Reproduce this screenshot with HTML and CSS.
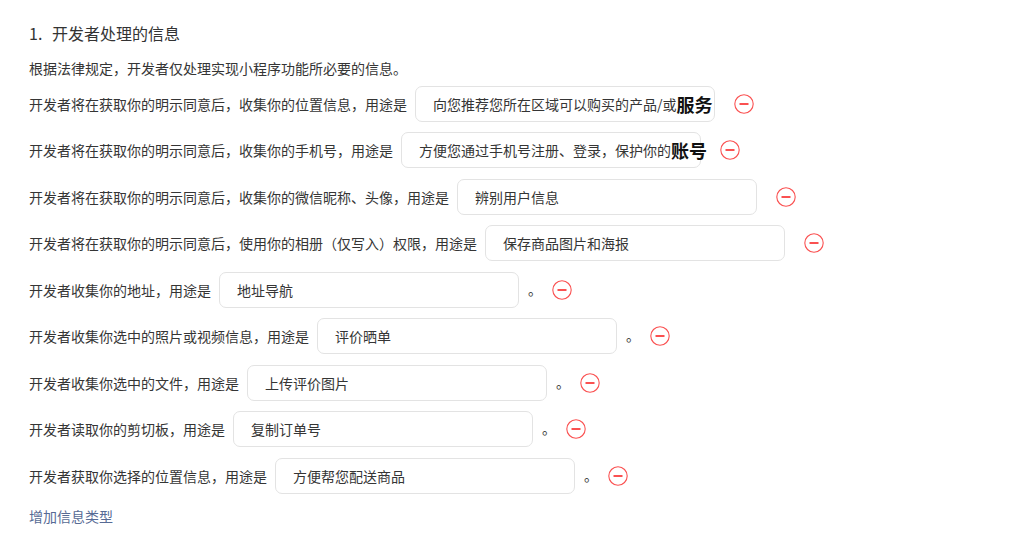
FILE: index.html
```html
<!DOCTYPE html>
<html lang="zh-CN">
<head>
<meta charset="utf-8">
<link rel="stylesheet" href="styles.css">
</head>
<body>
<div class="page">
  <h2 class="title"><span class="num">1.</span>开发者处理的信息</h2>
  <p class="desc">根据法律规定，开发者仅处理实现小程序功能所必要的信息。</p>
  <div class="rows">
    <div class="row">
      <span class="label">开发者将在获取你的明示同意后，收集你的位置信息，用途是</span>
      <div class="field">向您推荐您所在区域可以购买的产品/或<b class="big">服务</b></div>
      <span class="minus"><svg viewBox="0 0 20 20"><circle cx="10" cy="10" r="9.2"/><line x1="5.5" y1="10" x2="14.5" y2="10"/></svg></span>
    </div>
    <div class="row">
      <span class="label">开发者将在获取你的明示同意后，收集你的手机号，用途是</span>
      <div class="field">方便您通过手机号注册、登录，保护你的<b class="big">账号</b></div>
      <span class="minus"><svg viewBox="0 0 20 20"><circle cx="10" cy="10" r="9.2"/><line x1="5.5" y1="10" x2="14.5" y2="10"/></svg></span>
    </div>
    <div class="row">
      <span class="label">开发者将在获取你的明示同意后，收集你的微信昵称、头像，用途是</span>
      <div class="field">辨别用户信息</div>
      <span class="minus"><svg viewBox="0 0 20 20"><circle cx="10" cy="10" r="9.2"/><line x1="5.5" y1="10" x2="14.5" y2="10"/></svg></span>
    </div>
    <div class="row">
      <span class="label">开发者将在获取你的明示同意后，使用你的相册（仅写入）权限，用途是</span>
      <div class="field">保存商品图片和海报</div>
      <span class="minus"><svg viewBox="0 0 20 20"><circle cx="10" cy="10" r="9.2"/><line x1="5.5" y1="10" x2="14.5" y2="10"/></svg></span>
    </div>
    <div class="row">
      <span class="label">开发者收集你的地址，用途是</span>
      <div class="field">地址导航</div>
      <span class="dot">。</span>
      <span class="minus m2"><svg viewBox="0 0 20 20"><circle cx="10" cy="10" r="9.2"/><line x1="5.5" y1="10" x2="14.5" y2="10"/></svg></span>
    </div>
    <div class="row">
      <span class="label">开发者收集你选中的照片或视频信息，用途是</span>
      <div class="field">评价晒单</div>
      <span class="dot">。</span>
      <span class="minus m2"><svg viewBox="0 0 20 20"><circle cx="10" cy="10" r="9.2"/><line x1="5.5" y1="10" x2="14.5" y2="10"/></svg></span>
    </div>
    <div class="row">
      <span class="label">开发者收集你选中的文件，用途是</span>
      <div class="field">上传评价图片</div>
      <span class="dot">。</span>
      <span class="minus m2"><svg viewBox="0 0 20 20"><circle cx="10" cy="10" r="9.2"/><line x1="5.5" y1="10" x2="14.5" y2="10"/></svg></span>
    </div>
    <div class="row">
      <span class="label">开发者读取你的剪切板，用途是</span>
      <div class="field">复制订单号</div>
      <span class="dot">。</span>
      <span class="minus m2"><svg viewBox="0 0 20 20"><circle cx="10" cy="10" r="9.2"/><line x1="5.5" y1="10" x2="14.5" y2="10"/></svg></span>
    </div>
    <div class="row">
      <span class="label">开发者获取你选择的位置信息，用途是</span>
      <div class="field">方便帮您配送商品</div>
      <span class="dot">。</span>
      <span class="minus m2"><svg viewBox="0 0 20 20"><circle cx="10" cy="10" r="9.2"/><line x1="5.5" y1="10" x2="14.5" y2="10"/></svg></span>
    </div>
  </div>
  <a class="add">增加信息类型</a>
</div>
</body>
</html>
```

FILE: styles.css
```css
html, body {
  margin: 0;
  padding: 0;
  background: #fff;
}
body {
  font-family: "Noto Sans CJK SC", "Noto Sans", sans-serif;
  color: #353535;
}
.page {
  padding: 22px 0 0 29px;
}
.title {
  margin: 0;
  font-size: 16px;
  font-weight: normal;
  line-height: 22px;
  color: #333;
}
.num {
  display: inline-block;
  width: 23px;
}
.desc {
  margin: 14px 0 0;
  font-size: 14px;
  line-height: 20px;
  color: #353535;
}
.rows {
  margin-top: 7.5px;
  display: flex;
  flex-direction: column;
  gap: 10.5px;
}
.row {
  display: flex;
  align-items: center;
  height: 36px;
  font-size: 14px;
}
.label {
  white-space: nowrap;
  line-height: 20px;
}
.field {
  margin-left: 8px;
  width: 300px;
  height: 36px;
  box-sizing: border-box;
  border: 1px solid #e3e3e3;
  border-radius: 7px;
  padding: 0 0 0 17px;
  display: flex;
  align-items: center;
  white-space: nowrap;
  font-size: 14px;
  color: #353535;
  flex-shrink: 0;
}
.big {
  font-size: 18px;
  font-weight: bold;
  color: #111;
}
.dot {
  margin-left: 9px;
  width: 14px;
  line-height: 20px;
  position: relative;
  top: -1px;
}
.minus {
  margin-left: 19px;
  width: 20px;
  height: 20px;
  display: flex;
}
.minus.m2 {
  margin-left: 10px;
}
.minus svg {
  width: 20px;
  height: 20px;
  fill: none;
  stroke: #fa5151;
}
.minus circle {
  stroke-width: 1.1;
}
.minus line {
  stroke-width: 2;
}
.add {
  display: block;
  margin-top: 12px;
  font-size: 14px;
  line-height: 20px;
  color: #576b95;
  cursor: pointer;
}
```
